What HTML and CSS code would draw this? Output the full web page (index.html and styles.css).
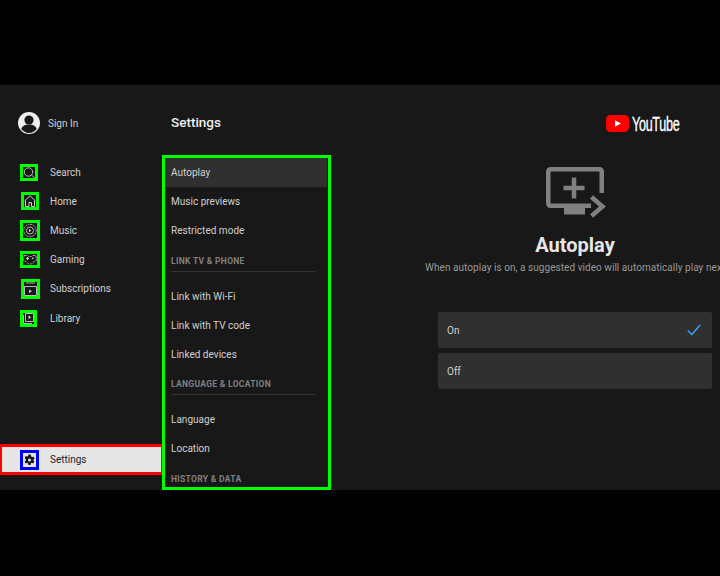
FILE: index.html
```html
<!DOCTYPE html>
<html lang="en">
<head>
    <meta charset="UTF-8">
    <title>YouTube Settings</title>
    <link rel="stylesheet" href="styles.css">
</head>
<body>
<div class="tv">
    <div class="side">
        <div class="signin">
            <svg width="22" height="22" viewBox="0 0 22 22">
                <circle cx="11" cy="11" r="11" fill="#eee"/>
                <circle cx="11" cy="8" r="4.600" fill="#181818"/>
                <path d="M3.200 17c1-3.400 4-4.600 7.800-4.600s6.800 1.200 7.800 4.600c-1.800 2.400-4.600 3.900-7.800 3.900s-6-1.500-7.800-3.900z" fill="#181818"/>
            </svg>
            <span>Sign In</span>
        </div>
        <ul class="nav">
            <li>
                <span class="icon"><svg width="12" height="11" viewBox="0 0 12 11"><circle cx="5.500" cy="5" r="4.200" fill="none" stroke="#bbb"/><path d="M8.500 8l3 3" stroke="#bbb"/></svg></span>
                <span>Search</span>
            </li>
            <li>
                <span class="icon icon-in"><svg width="12" height="12" viewBox="0 0 12 12"><path d="M.5 6L6 .8 11.500 6M1.500 5.500v6h3.500V7.500h2.500v4h3v-6" fill="none" stroke="#ccc"/></svg></span>
                <span>Home</span>
            </li>
            <li>
                <span class="icon"><svg width="14" height="15" viewBox="0 0 14 15"><circle cx="7" cy="7.500" r="6.200" fill="none" stroke="#aaa" stroke-dasharray="2 .6"/><circle cx="7" cy="7.500" r="3.600" fill="none" stroke="#bbb"/><path d="M6 5.800l2.400 1.700L6 9.200z" fill="#ccc"/></svg></span>
                <span>Music</span>
            </li>
            <li>
                <span class="icon"><svg width="14" height="11" viewBox="0 0 14 11"><path d="M1 1.500h3.500l1 1h3l1-1H13l.5 5-2.500 1-2.500 2.500h-3L3 7.500l-2.500-1z" fill="none" stroke="#aaa" stroke-dasharray="2.500 .8"/><path d="M3 4.500h3M4.500 3v3" stroke="#ccc"/><path d="M9 3.500h1.500v1.500H9z" fill="#ccc"/></svg></span>
                <span>Gaming</span>
            </li>
            <li>
                <span class="icon icon-in"><svg width="13" height="14" viewBox="0 0 13 14"><path d="M2 1h9" stroke="#aaa"/><path d="M.5 4.500h12v9H.5z" fill="none" stroke="#bbb"/><path d="M5 7.500l3 1.800-3 1.800z" fill="#ccc"/></svg></span>
                <span>Subscriptions</span>
            </li>
            <li>
                <span class="icon"><svg width="11" height="11" viewBox="0 0 11 11"><path d="M.5 2v8.500H9" fill="none" stroke="#bbb"/><path d="M2.500.5h8v8h-8z" fill="none" stroke="#bbb"/><path d="M5.500 2.500l2.600 1.700-2.600 1.700z" fill="#ddd"/></svg></span>
                <span>Library</span>
            </li>
        </ul>
        <div class="side-settings">
            <span class="icon icon-blue"><svg width="13" height="14" viewBox="0 0 24 24"><path d="M19.400 13a7.500 7.500 0 0 0 0-2l2.200-1.700-2.100-3.600-2.600 1a7.500 7.500 0 0 0-1.700-1L14.100 2H9.900l-.4 2.700a7.500 7.500 0 0 0-1.700 1l-2.600-1-2.100 3.600L5.300 11a7.500 7.500 0 0 0 0 2l-2.200 1.700 2.100 3.600 2.600-1a7.500 7.500 0 0 0 1.700 1l.4 2.700h4.200l.4-2.700a7.500 7.500 0 0 0 1.700-1l2.600 1 2.100-3.600zM12 14.800a2.800 2.800 0 1 1 0-5.600 2.800 2.800 0 0 1 0 5.600z" fill="#181818"/></svg></span>
            <span>Settings</span>
        </div>
    </div>

    <div class="middle">
        <h1 class="page-title">Settings</h1>
        <div class="list">
            <div class="item current">Autoplay</div>
            <div class="item">Music previews</div>
            <div class="item">Restricted mode</div>
            <div class="section"><span>LINK TV &amp; PHONE</span></div>
            <div class="item">Link with Wi-Fi</div>
            <div class="item">Link with TV code</div>
            <div class="item">Linked devices</div>
            <div class="section"><span>LANGUAGE &amp; LOCATION</span></div>
            <div class="item">Language</div>
            <div class="item">Location</div>
            <div class="section"><span>HISTORY &amp; DATA</span></div>
        </div>
    </div>

    <div class="pane">
        <div class="logo">
            <svg width="23" height="17" viewBox="0 0 23 17">
                <rect width="23" height="17" rx="4.500" fill="#f00"/>
                <path d="M9 5.200l6 3.300-6 3.300z" fill="#fff"/>
            </svg>
            <span class="logo-text">YouTube</span>
        </div>
        <div class="detail">
            <svg width="62" height="52" viewBox="0 0 62 52">
                <path d="M57.750 27V6q0-2.750-2.750-2.750H7Q4.250 3.250 4.250 6v31q0 2.750 2.750 2.750h40" fill="none" stroke="#808080" stroke-width="4.500"/>
                <path d="M20 42h21v6.500H20z" fill="#808080"/>
                <path d="M19.500 22h21M30 11.500v21" stroke="#808080" stroke-width="4.500"/>
                <path d="M47.500 31l11 9.500-11 9.500" fill="none" stroke="#808080" stroke-width="4.500"/>
            </svg>
            <h2 class="detail-title">Autoplay</h2>
            <p class="detail-text">When autoplay is on, a suggested video will automatically play next.</p>
            <div class="options">
                <div class="option">On
                    <svg width="14" height="12" viewBox="0 0 14 12"><path d="M.8 6.500l4 4L13.200 1" fill="none" stroke="#3ea6ff" stroke-width="1.300"/></svg>
                </div>
                <div class="option">Off</div>
            </div>
        </div>
    </div>
</div>
</body>
</html>
```

FILE: styles.css
```css
html, body, ul, li, h1, h2, p {
    margin: 0;
    padding: 0;
    list-style: none;
}

body {
    width: 720px;
    height: 576px;
    overflow: hidden;
    background: #000;
    font-family: Roboto, "Liberation Sans", sans-serif;
    font-size: 10px;
    color: #d0d0d0;
}

.tv {
    display: flex;
    height: 405px;
    margin-top: 85px;
    background: #181818;
}

/* left column */
.side {
    display: flex;
    flex-direction: column;
    width: 162px;
    flex-shrink: 0;
    padding-top: 27px;
    box-sizing: border-box;
}

.signin {
    display: flex;
    align-items: center;
    gap: 8px;
    height: 22px;
    padding-left: 18px;
}

.nav {
    margin-top: 23.500px;
}

.nav li {
    display: grid;
    grid-template-columns: 30px 1fr;
    align-items: center;
    height: 29.200px;
    padding-left: 20px;
}

.icon {
    display: flex;
    justify-self: start;
    border: 3px solid #0f0;
}

.icon-in {
    margin-left: 1px;
}

.icon-blue {
    border-color: #00f;
}

.side-settings {
    display: grid;
    grid-template-columns: 30px 1fr;
    align-items: center;
    height: 31px;
    margin-top: auto;
    margin-bottom: 15px;
    padding-left: 18px;
    box-sizing: border-box;
    border: solid #f00;
    border-width: 3px 1px 3px 2px;
    background: #e6e6e6;
    color: #222;
}

/* middle column */
.middle {
    width: 169px;
    flex-shrink: 0;
    padding-top: 27px;
}

.page-title {
    height: 22px;
    padding-left: 9px;
    font-size: 13.500px;
    font-weight: 500;
    line-height: 21px;
    color: #eee;
}

.list {
    height: 335px;
    margin-top: 21px;
    box-sizing: border-box;
    overflow: hidden;
    border: 3px solid #0f0;
}

.item {
    height: 29.200px;
    padding-left: 6px;
    line-height: 29.500px;
    letter-spacing: .02px;
}

.current {
    margin-right: 1px;
    background: #303030;
}

.section {
    height: 36px;
    margin: 0 12px 0 6px;
    box-sizing: border-box;
    padding-top: 10px;
    font-size: 8.500px;
    font-weight: 700;
    line-height: 11px;
    letter-spacing: .3px;
    color: #808080;
}

.section span {
    display: block;
    height: 15px;
    border-bottom: 1px solid #333;
}

/* right column */
.pane {
    flex: 1;
    padding-top: 30px;
}

.logo {
    display: flex;
    gap: 3px;
    height: 17px;
    margin-left: 275px;
}

.logo-text {
    font-family: "Liberation Sans", sans-serif;
    font-size: 21px;
    line-height: 17px;
    -webkit-text-stroke: .4px #fff;
    letter-spacing: -.5px;
    color: #fff;
    transform: scaleX(.6);
    transform-origin: left center;
}

.detail {
    display: flex;
    flex-direction: column;
    align-items: center;
    width: 274px;
    margin: 34px 0 0 107px;
}

.detail-title {
    margin-top: 15px;
    font-size: 20px;
    font-weight: 700;
    line-height: 24px;
    color: #e6e6e6;
}

.detail-text {
    margin: 5px 0 0 3px;
    line-height: 12px;
    white-space: nowrap;
    letter-spacing: .05px;
    color: #999;
}

.options {
    display: flex;
    flex-direction: column;
    gap: 5px;
    align-self: stretch;
    margin-top: 38px;
}

.option {
    display: flex;
    align-items: center;
    justify-content: space-between;
    height: 36px;
    padding: 0 11px 0 9px;
    background: #303030;
    border-radius: 2px;
}
```
